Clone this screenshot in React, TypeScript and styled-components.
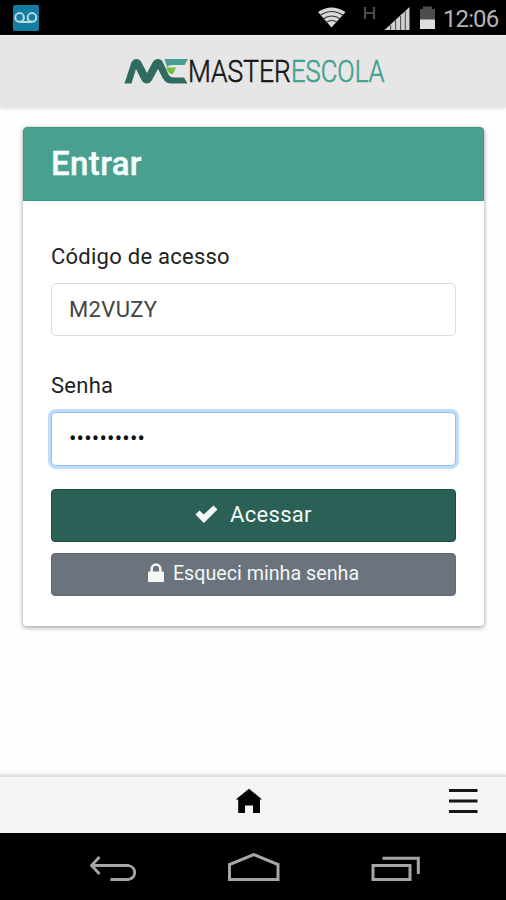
import React from "react";
import styled, { createGlobalStyle, css } from "styled-components";

const GlobalStyle = createGlobalStyle`
  *, *::before, *::after { box-sizing: border-box; }
  body {
    margin: 0;
    background: #fff;
    font-family: Roboto, "Liberation Sans", sans-serif;
    color: #222;
  }
`;

const Screen = styled.div`
  display: flex;
  flex-direction: column;
  width: 506px;
  height: 900px;
  overflow: hidden;
  background: #fefefe;
`;

const StatusBar = styled.div`
  display: flex;
  flex: none;
  align-items: flex-start;
  justify-content: space-between;
  height: 35px;
  padding: 0 7px 0 12px;
  background: #000;
`;

const StatusIcons = styled.div`
  display: flex;
  align-items: flex-start;
`;

const Clock = styled.span`
  width: 56px;
  margin-left: 7px;
  padding-top: 5px;
  color: #b4b4b4;
  font-size: 24px;
  line-height: 28px;
  letter-spacing: -0.9px;
  white-space: nowrap;
`;

const TopBar = styled.header`
  display: flex;
  flex: none;
  justify-content: center;
  height: 72px;
  padding-top: 10px;
  border-top: 1px solid #f6f6f6;
  background: #e6e6e6;
  box-shadow: 0 1px 4px rgba(0, 0, 0, 0.16);
`;

const Brand = styled.div`
  display: flex;
  width: 258px;
  height: 48px;
`;

const Wordmark = styled.div`
  display: flex;
  width: 194px;
  height: 48px;
  font-size: 32px;
  line-height: 51px;
  font-weight: 300;
  white-space: nowrap;
`;

const Word = styled.span<{ $accent?: boolean }>`
  flex: none;
  width: ${(p) => (p.$accent ? 112 : 123)}px;
  margin-right: ${(p) => (p.$accent ? -18 : -20)}px;
  color: ${(p) => (p.$accent ? "#43a18f" : "#171717")};
  -webkit-text-stroke: 0.6px currentColor;
  transform: scaleX(${(p) => (p.$accent ? 0.8 : 0.825)});
  transform-origin: left;
`;

const Content = styled.main`
  flex: 1;
  padding: 20px 22px 0 23px;
`;

const Card = styled.section`
  height: 499px;
  border-radius: 4px;
  background: #fff;
  box-shadow: 0 2px 5px rgba(0, 0, 0, 0.3), 0 0 3px rgba(0, 0, 0, 0.14);
  overflow: hidden;
`;

const CardHeader = styled.h1`
  height: 74px;
  margin: 0;
  padding: 16px 27px 0;
  border: 1px solid #3f9585;
  border-bottom-color: #329d89;
  border-radius: 4px 4px 0 0;
  background: #499f90;
  color: #f6fffd;
  font-size: 33px;
  line-height: 40px;
  font-weight: 500;
  letter-spacing: 0.4px;
  -webkit-text-stroke: 0.4px currentColor;
`;

const Form = styled.form`
  display: flex;
  flex-direction: column;
  padding: 42px 28px 0;
`;

const Label = styled.label`
  height: 28px;
  font-size: 22px;
  line-height: 28px;
  letter-spacing: 0.25px;
`;

const Field = styled.input<{ $active?: boolean }>`
  width: 405px;
  height: 53px;
  margin: 12px 0 36px;
  padding: 0 17px;
  border: 1.5px solid #d9dcdf;
  border-radius: 5px;
  outline: none;
  background: #fff;
  color: #444;
  font: 22px Roboto, sans-serif;
  letter-spacing: 0.35px;
  ${(p) =>
    p.$active &&
    css`
      height: 54px;
      margin: 12px 0 23px;
      padding-bottom: 2px;
      border-color: #90c0f2;
      box-shadow: 0 0 0 3px #bcdefb;
      color: #111;
      letter-spacing: 0.2px;
    `}
`;

const Button = styled.button<{ $variant: "primary" | "secondary" }>`
  display: flex;
  align-items: center;
  justify-content: center;
  width: 405px;
  border: 1px solid;
  border-radius: 4px;
  color: #f3f7f6;
  font-family: inherit;
  ${(p) =>
    p.$variant === "primary"
      ? css`
          height: 53px;
          gap: 12px;
          margin-bottom: 11px;
          padding: 0 0 2px;
          background: #2b6056;
          border-color: #175043;
          font-size: 22px;
          letter-spacing: 0.3px;
        `
      : css`
          height: 43px;
          gap: 9px;
          padding: 0 0 3px;
          background: #6b747c;
          border-color: #626b73;
          font-size: 19.7px;
        `}
`;

const TabBar = styled.nav`
  display: grid;
  flex: none;
  grid-template-columns: 1fr auto 1fr;
  height: 58px;
  padding: 11px 27px 0 20px;
  border-top: 2px solid #dedede;
  background: #f5f5f5;
  box-shadow: 0 -1px 3px rgba(0, 0, 0, 0.12);
`;

const MenuSlot = styled.div`
  display: flex;
  justify-content: flex-end;
`;

const SystemBar = styled.div`
  display: flex;
  flex: none;
  align-items: flex-start;
  justify-content: space-between;
  height: 67px;
  padding: 18px 84px 0 88px;
  background: #000;
`;

function Voicemail() {
  return (
    <svg width="28" height="35" viewBox="0 0 28 35">
      <rect x="1" y="5" width="26" height="26" rx="2" fill="#147da2" />
      <g fill="none" stroke="#b9d9e3" strokeWidth="2">
        <circle cx="7.6" cy="17.4" r="4.3" />
        <circle cx="20" cy="17.4" r="4.3" />
        <path d="M7.6 22h12.4" />
      </g>
    </svg>
  );
}

function Signals() {
  return (
    <svg width="119" height="35" viewBox="316 0 119 35">
      <path d="M317 12Q330.500 3 344.500 12L330.500 27.500Z" fill="#d8d8d8" />
      <g fill="none" stroke="#333" strokeWidth="1.1">
        <path d="M319 15.500Q330.500 7.500 342.500 15.500" />
        <path d="M322 19Q330.500 13 339.500 19" />
        <path d="M325 22.500Q330.500 18.500 336.500 22.500" />
      </g>
      <path d="M364 7v12M373 7v12M364 13h9" stroke="#4b4b4b" strokeWidth="2.2" />
      <path d="M383.500 30L408.500 7V30Z" fill="#d2d2d2" />
      <path d="M389.600 25v5M394.600 20v10M399.600 16v14M404.300 11v19" stroke="#555" strokeWidth="1.1" />
      <path d="M419 9h3V6.500h9V9h3v11h-15z" fill="#4d4d4d" />
      <path d="M419 19.500h15V29h-15z" fill="#dedede" />
    </svg>
  );
}

function LogoMark() {
  return (
    <svg width="64" height="48" viewBox="124 46 64 48">
      <path
        d="M124.500 83.500L131 63.500Q132.500 59 136.500 59Q140 59 141.500 62.500L147 73L152.500 62.500Q154.500 59 158 59Q161.500 59 163 62.500L168 73.500Q169.500 77.500 174 77.500H184L187.500 83.500H171.500Q165.500 83.500 163 78.500L158 69L152 80Q150 83.500 146.700 83.500Q143.500 83.500 141.500 80L136 69L131.500 83.500Z"
        fill="#316a60"
      />
      <path d="M164.500 59H188L184.500 65H173Q168.500 65 167 67Z" fill="#4a9e91" />
      <path d="M166 67.500H176L173 74H171Q168 73 166 67.500Z" fill="#77b942" />
    </svg>
  );
}

function CheckIcon() {
  return (
    <svg width="23" height="20" viewBox="0 0 23 20">
      <path d="M0.500 9.500L4.500 5.500L8.700 9.500L18.500 0.500L22.500 4.500L8.900 18Z" fill="currentColor" />
    </svg>
  );
}

function LockIcon() {
  return (
    <svg width="16" height="20" viewBox="0 0 16 20">
      <path d="M3.700 9V5.800a4.300 4.300 0 0 1 8.600 0V9" fill="none" stroke="currentColor" strokeWidth="2.500" />
      <rect y="8.500" width="16" height="10.500" rx="1" fill="currentColor" />
    </svg>
  );
}

function HomeIcon() {
  return (
    <svg width="28" height="26" viewBox="236.500 788 28 26">
      <path d="M236.300 799.500L249.500 788.700L262.500 799.500H260.500V813H253.500V805.500H245.500V813H238.700V799.500Z" fill="#030303" />
    </svg>
  );
}

function MenuIcon() {
  return (
    <svg width="30" height="28" viewBox="449 788 30 28">
      <path d="M449 790.500h28.500M449 801h28.500M449 811.500h28.500" stroke="#161616" strokeWidth="2.800" />
    </svg>
  );
}

function BackIcon() {
  return (
    <svg width="50" height="32" viewBox="88 851 50 32">
      <path d="M99.500 857L91.500 865.500L99.500 874M91.500 865.500H128.500Q134.700 867 134.700 872.500T128.500 879.500H110.500" fill="none" stroke="#a6a6a6" strokeWidth="2.800" />
    </svg>
  );
}

function SystemHomeIcon() {
  return (
    <svg width="54" height="32" viewBox="228 851 54 32">
      <path d="M229.500 879.500V864.500L253.700 854.500L278 864.500V879.500Z" fill="none" stroke="#a6a6a6" strokeWidth="3" />
    </svg>
  );
}

function RecentsIcon() {
  return (
    <svg width="51" height="32" viewBox="371 851 51 32">
      <path d="M382.500 858.300H418.300V874M373 865.500H410V879.500H373Z" fill="none" stroke="#a6a6a6" strokeWidth="3" />
    </svg>
  );
}

export default function App() {
  return (
    <>
      <GlobalStyle />
      <Screen>
        <StatusBar>
          <Voicemail />
          <StatusIcons>
            <Signals />
            <Clock>12:06</Clock>
          </StatusIcons>
        </StatusBar>
        <TopBar>
          <Brand>
            <LogoMark />
            <Wordmark>
              <Word>MASTER</Word>
              <Word $accent>ESCOLA</Word>
            </Wordmark>
          </Brand>
        </TopBar>
        <Content>
          <Card>
            <CardHeader>Entrar</CardHeader>
            <Form>
              <Label htmlFor="code">Código de acesso</Label>
              <Field id="code" readOnly value="M2VUZY" />
              <Label htmlFor="password">Senha</Label>
              <Field id="password" type="password" readOnly value="1234567890" $active />
              <Button type="button" $variant="primary">
                <CheckIcon />
                Acessar
              </Button>
              <Button type="button" $variant="secondary">
                <LockIcon />
                Esqueci minha senha
              </Button>
            </Form>
          </Card>
        </Content>
        <TabBar>
          <span />
          <HomeIcon />
          <MenuSlot>
            <MenuIcon />
          </MenuSlot>
        </TabBar>
        <SystemBar>
          <BackIcon />
          <SystemHomeIcon />
          <RecentsIcon />
        </SystemBar>
      </Screen>
    </>
  );
}
